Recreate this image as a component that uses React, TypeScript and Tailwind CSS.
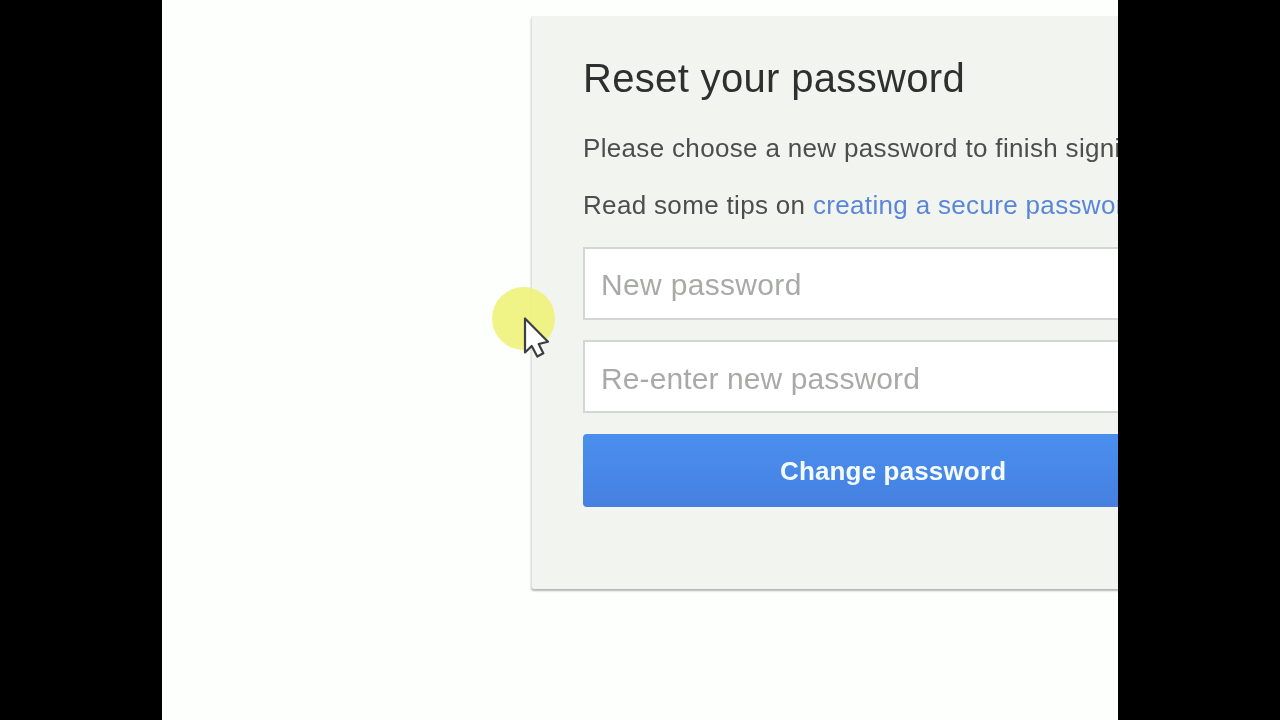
const sans = "font-['Liberation_Sans',Arial,sans-serif]";

function Cursor() {
  return (
    <>
      <div className="absolute left-[492px] top-[287px] h-[63px] w-[63px] rounded-full bg-[#eef37a]/90 blur-[0.5px]" />
      <svg className="absolute left-[522px] top-[317px]" width="30" height="44" viewBox="0 0 30 44">
        <path
          d="M3 1.5 L3 35.5 L9.7 29 L15.3 39.5 L21.3 36.3 L16.7 27 L26 24.7 Z"
          fill="#ffffff"
          stroke="#3a3f44"
          strokeWidth="2.2"
          strokeLinejoin="round"
        />
      </svg>
    </>
  );
}

export default function App() {
  return (
    <div className={`relative flex h-[720px] w-[1280px] justify-center overflow-hidden bg-black ${sans}`}>
      <main className="h-full w-[956px] overflow-hidden bg-[#fdfffd] pl-[369px] pt-[16px]">
        <section className="h-[573px] w-[700px] rounded-[3px] border-l border-[#e0e2de] bg-[#f2f4f0] pl-[51px] pt-[38px] shadow-[0_2px_2px_#b4b6b2] blur-[0.6px]">
          <h1 className="text-[40px] leading-[48px] tracking-[0.33px] whitespace-nowrap text-[#2c302e]">Reset your password</h1>
          <p className="mt-[29px] text-[26px] leading-[34px] tracking-[0.33px] whitespace-nowrap text-[#4c4e4c]">
            Please choose a new password to finish signing in.
          </p>
          <p className="mt-[23px] text-[26px] leading-[34px] tracking-[0.33px] whitespace-nowrap text-[#4c4e4c]">
            Read some tips on <a className="text-[#5a86d8]">creating a secure password.</a>
          </p>
          <div className="mt-[25px] flex h-[73px] w-[600px] items-center border-2 border-[#d4d6d4] bg-white pl-[16px] pt-[2px] text-[30px] tracking-[0.33px] text-[#a8aaa8]">New password</div>
          <div className="mt-[20px] flex h-[73px] w-[600px] items-center border-2 border-[#d4d6d4] bg-white pl-[16px] pt-[3px] text-[30px] tracking-[0.1px] text-[#a8aaa8]">Re-enter new password</div>
          <button className="mt-[21px] flex h-[73px] w-[620px] items-center rounded-[4px] bg-gradient-to-b from-[#4a8fef] to-[#4580e0] pl-[197px] pt-[2px] text-[26px] font-bold tracking-[0.15px] text-[#f4fbff]">Change password</button>
        </section>
      </main>
      <Cursor />
    </div>
  );
}
